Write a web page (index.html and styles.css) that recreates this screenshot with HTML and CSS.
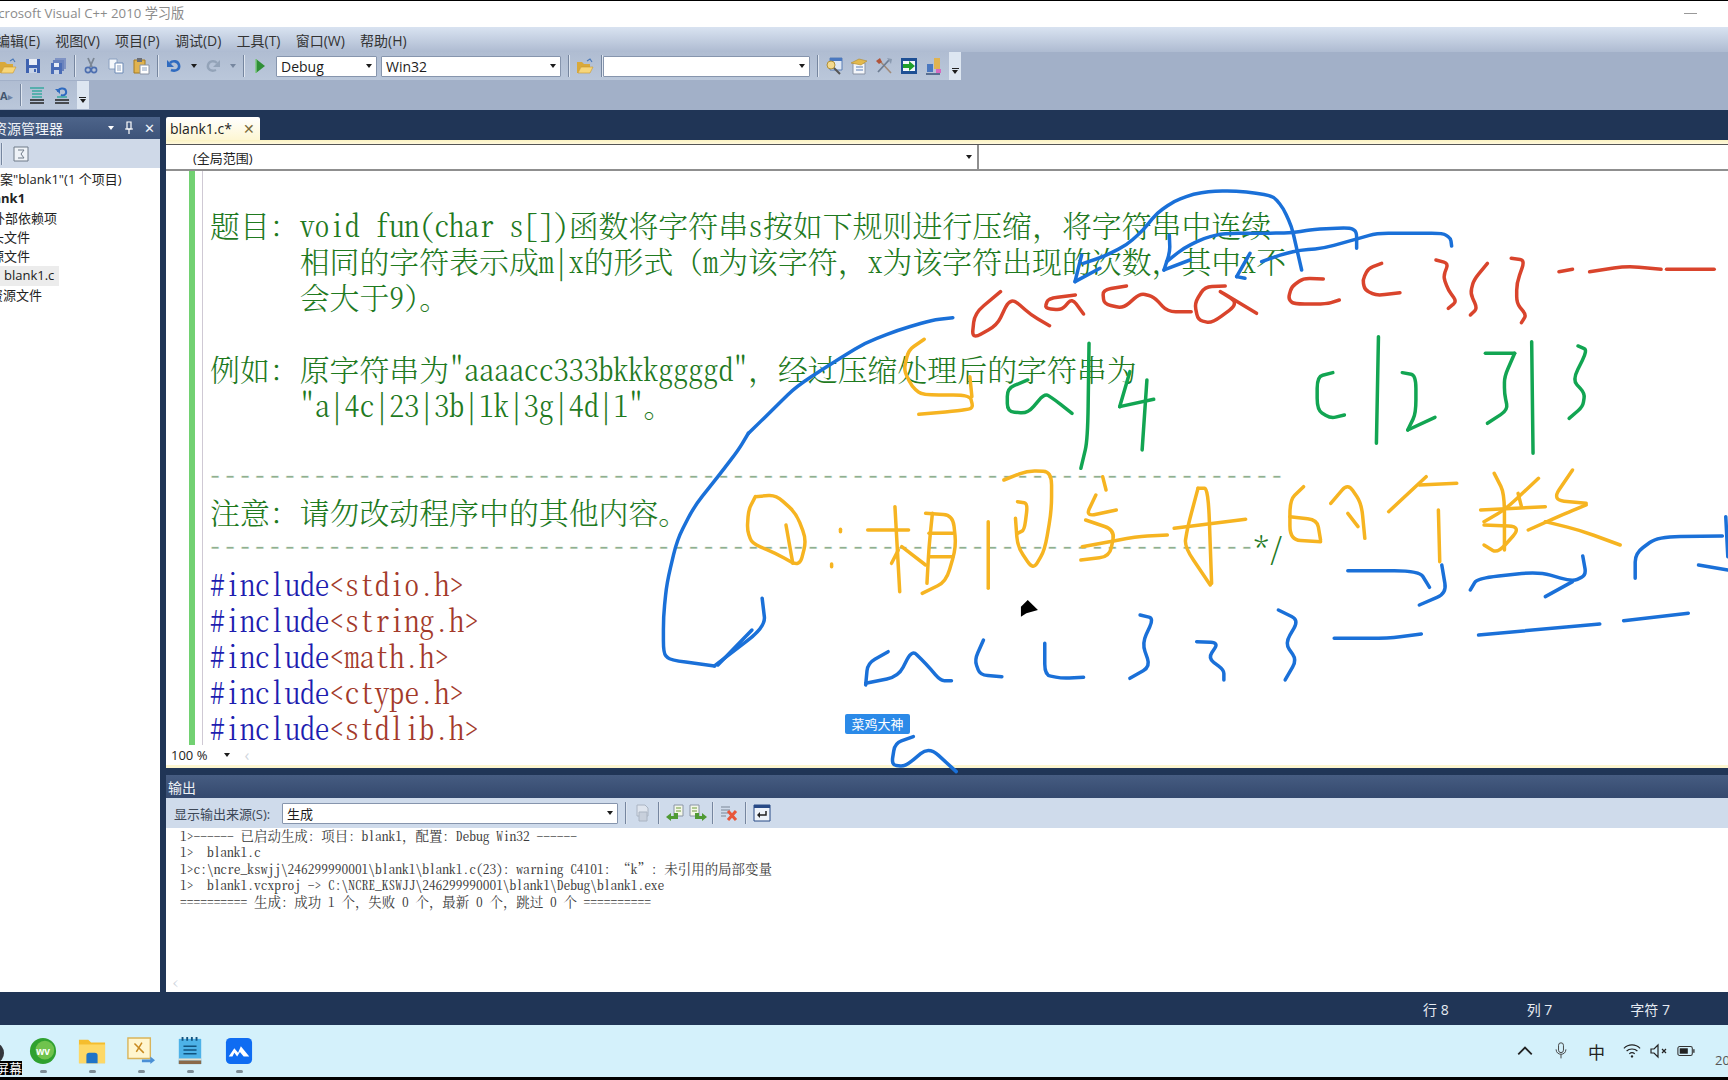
FILE: index.html
```html
<!DOCTYPE html>
<html lang="zh">
<head>
<meta charset="utf-8">
<title>Visual C++ 2010</title>
<link rel="stylesheet" href="styles.css">
</head>
<body>
<svg class="defs" aria-hidden="true">
  <symbol id="i-open" viewBox="0 0 18 18"><path d="M1 5h5l2 2h6v3H5l-3 6H1z" fill="#d9a93a"/><path d="M5 10h12l-3 6H2z" fill="#f7d67a" stroke="#c9972d" stroke-width=".6"/><path d="M11 4l3-2 2 3" fill="none" stroke="#4a78b8" stroke-width="1.2"/></symbol>
  <symbol id="i-save" viewBox="0 0 18 18"><path d="M2 2h14v14H2z" fill="#3e62b0"/><path d="M5 2h8v6H5z" fill="#e8edf6"/><path d="M5 11h8v5H5z" fill="#c8d4e8"/><path d="M10 12h2v3h-2z" fill="#3e62b0"/></symbol>
  <symbol id="i-saveall" viewBox="0 0 18 18"><path d="M6 1h11v11H6z" fill="#7f93c4"/><path d="M4 3h11v11H4z" fill="#6a83bd"/><path d="M2 6h11v11H2z" fill="#4a6cb6"/><path d="M5 6h5v4H5z" fill="#e8edf6"/><path d="M5 13h5v4H5z" fill="#c8d4e8"/></symbol>
  <symbol id="i-cut" viewBox="0 0 18 18"><path d="M6 1l4 9M12 1l-4 9" stroke="#7b8694" stroke-width="1.8" fill="none"/><circle cx="6" cy="13" r="2.6" fill="none" stroke="#4d6fb0" stroke-width="1.6"/><circle cx="12" cy="13" r="2.6" fill="none" stroke="#4d6fb0" stroke-width="1.6"/></symbol>
  <symbol id="i-copy" viewBox="0 0 18 18"><path d="M2 2h8v10H2z" fill="#f4f7fb" stroke="#8aa0c0"/><path d="M8 6h8v10H8z" fill="#fff" stroke="#6d8ab5"/><path d="M10 9h4M10 11h4M10 13h4" stroke="#8aa0c0"/></symbol>
  <symbol id="i-paste" viewBox="0 0 18 18"><path d="M2 3h11v13H2z" fill="#e0b350" stroke="#a47a20"/><path d="M5 1h5v4H5z" fill="#6b6f78"/><path d="M8 8h9v9H8z" fill="#fff" stroke="#8a94a5"/><path d="M10 11h5M10 13h5" stroke="#8aa0c0"/></symbol>
  <symbol id="i-undo" viewBox="0 0 18 18"><path d="M6 13c5 2 9-1 8-5s-6-5-9-2" fill="none" stroke="#2f6bc0" stroke-width="2.6"/><path d="M2 3v7h7z" fill="#2f6bc0"/></symbol>
  <symbol id="i-redo" viewBox="0 0 18 18"><path d="M12 13c-5 2-9-1-8-5s6-5 9-2" fill="none" stroke="#93a3b8" stroke-width="2.4"/><path d="M16 3v7H9z" fill="#93a3b8"/></symbol>
  <symbol id="i-play" viewBox="0 0 18 18"><path d="M5 2l9 7-9 7z" fill="#2f8f36"/><path d="M5 2v14" stroke="#7cc780" stroke-width="1.5"/></symbol>
  <symbol id="i-find" viewBox="0 0 18 18"><path d="M5 1h12v12H5z" fill="#dfe8f4" stroke="#5b7fb5"/><path d="M5 1h12v3H5z" fill="#4a78c0"/><circle cx="6" cy="8" r="4" fill="#f3d98e" stroke="#b0903a"/><path d="M9 11l6 6" stroke="#555" stroke-width="2"/></symbol>
  <symbol id="i-folder2" viewBox="0 0 18 18"><path d="M3 6h12v11H3z" fill="#f4f6fa" stroke="#8a94a5"/><path d="M1 6l8-4 8 2-6 4z" fill="#e3b94d" stroke="#b08a2a" stroke-width=".6"/><path d="M6 10h7M6 13h7" stroke="#5b7fb5"/></symbol>
  <symbol id="i-tools" viewBox="0 0 18 18"><path d="M4 3l12 13" stroke="#a08a78" stroke-width="1.6"/><path d="M14 3L3 15" stroke="#6d7d92" stroke-width="1.8"/><path d="M1 4l4-3 2 4-3 2z" fill="#b0543a"/><path d="M12 1l5 1-1 5-2-3z" fill="#8a9ab0"/></symbol>
  <symbol id="i-export" viewBox="0 0 18 18"><path d="M1 1h16v16H1z" fill="#1d4f94"/><path d="M3 4h12v10H3z" fill="#f2f6fb"/><path d="M3 7h6V4l6 5-6 5v-3H3z" fill="#1fa02c"/></symbol>
  <symbol id="i-build" viewBox="0 0 18 18"><path d="M2 7h6v8H2z" fill="#4a78c0"/><path d="M9 1h6v11H9z" fill="#e0b350"/><path d="M11 12h5v4h-5z" fill="#d66ac0"/><path d="M1 16h14v2H1z" fill="#596f90"/></symbol>
  <symbol id="i-list" viewBox="0 0 18 18"><path d="M2 2h14M4 5h10M4 8h10M4 11h10" stroke="#39a9a0" stroke-width="1.5"/><path d="M2 14h14M2 17h14" stroke="#222" stroke-width="1.5"/></symbol>
  <symbol id="i-list2" viewBox="0 0 18 18"><path d="M5 6c0-4 7-5 8-1s-3 5-5 4" fill="none" stroke="#2f6bc0" stroke-width="2"/><path d="M2 3l5 0 0 5z" fill="#2f6bc0"/><path d="M4 11h10" stroke="#39a9a0" stroke-width="1.5"/><path d="M2 14h14M2 17h14" stroke="#222" stroke-width="1.5"/></symbol>
  <symbol id="i-page" viewBox="0 0 18 18"><path d="M2 2h14v14H2z" fill="#eef2f7" stroke="#6f7a88"/><path d="M6 5h6l-3 4 3 4H6" fill="none" stroke="#6f7a88"/></symbol>
  <symbol id="i-fade" viewBox="0 0 18 18"><path d="M4 1h8l3 3v8H4z" fill="#dfe5ee" stroke="#aab4c2"/><path d="M6 8h8v9H6z" fill="#c8d0dc" stroke="#aab4c2"/></symbol>
  <symbol id="i-prev" viewBox="0 0 18 18"><path d="M8 1h9v11H8z" fill="#f3f7e8" stroke="#8a94a5"/><path d="M10 4h5M10 7h5" stroke="#6d9c3a"/><path d="M8 9v3h-3V9L0 13l5 4v-2h7V9z" fill="#4f9a34"/></symbol>
  <symbol id="i-next" viewBox="0 0 18 18"><path d="M1 1h9v11H1z" fill="#f3f7e8" stroke="#8a94a5"/><path d="M3 4h5M3 7h5" stroke="#6d9c3a"/><path d="M10 9v3h3V9l5 4-5 4v-2H6V9z" fill="#4f9a34"/></symbol>
  <symbol id="i-clear" viewBox="0 0 18 18"><path d="M1 3h9M1 6h9M1 9h7M1 12h5" stroke="#98a4b4" stroke-width="1.4"/><path d="M8 7l8 9M16 7l-8 9" stroke="#e8563a" stroke-width="3"/></symbol>
  <symbol id="i-wrap" viewBox="0 0 18 18"><path d="M1 1h16v16H1z" fill="#eef3fa" stroke="#284a86"/><path d="M1 1h16v3H1z" fill="#284a86"/><path d="M5 11h8V7" fill="none" stroke="#222" stroke-width="1.5"/><path d="M7 8v6l-3-3z" fill="#222"/></symbol>
  <symbol id="i-pin" viewBox="0 0 12 14"><path d="M4 1h4v7H4z" fill="none" stroke="#fff" stroke-width="1.2"/><path d="M2 8h8M6 8v5" stroke="#fff" stroke-width="1.2"/></symbol>
  <symbol id="t-wv" viewBox="0 0 30 30"><circle cx="15" cy="15" r="14" fill="#2fa12f"/><circle cx="17" cy="14" r="10" fill="#8bd15a" opacity=".7"/><text x="15" y="19" text-anchor="middle" class="wv-text">wv</text></symbol>
  <symbol id="t-folder" viewBox="0 0 30 30"><path d="M1 3h10l3 3h15v22H1z" fill="#f5bd2d"/><path d="M1 8h28v20H1z" fill="#fdd866"/><path d="M9 20q0-3 3-3h6q3 0 3 3v8H9z" fill="#1f74c8"/></symbol>
  <symbol id="t-shot" viewBox="0 0 30 30"><path d="M1 1h24v22H1z" fill="#fff6cf" stroke="#d9b45a" stroke-width="1.5"/><path d="M8 7l10 10M16 6l-6 10" stroke="#c98a1f" stroke-width="1.6"/><path d="M16 24h9v-3l5 4-5 4v-2h-9z" fill="#4a90d6"/></symbol>
  <symbol id="t-note" viewBox="0 0 30 30"><path d="M3 2h24v27H3z" fill="#4db2e8"/><path d="M3 25h24v4H3z" fill="#8a6a4a"/><path d="M3 23h24v2H3z" fill="#e7e0d0"/><path d="M8 10h14M8 14h14M8 18h14" stroke="#11537f" stroke-width="1.6"/><path d="M7 0v4M12 0v4M17 0v4M22 0v4" stroke="#11537f" stroke-width="2"/></symbol>
  <symbol id="t-app" viewBox="0 0 30 30"><rect x="1" y="1" width="28" height="28" rx="5" fill="#0f6cf2"/><path d="M4 21l6-9 4 5 3-7 9 11h-6l-4-5-3 5-3-4-2 4z" fill="#fff"/></symbol>
</svg>

<div class="titleline"></div>
<header class="titlebar"><span class="titletext">Microsoft Visual C++ 2010 学习版</span><span class="minimize"></span></header>
<nav class="menubar">
  <span class="m m-first">编辑(E)</span><span class="m">视图(V)</span><span class="m">项目(P)</span><span class="m">调试(D)</span><span class="m">工具(T)</span><span class="m">窗口(W)</span><span class="m">帮助(H)</span>
</nav>
<div class="toolrow tool1">
  <div class="band">
    <svg class="ic ic-first"><use href="#i-open"/></svg><svg class="ic"><use href="#i-save"/></svg><svg class="ic"><use href="#i-saveall"/></svg><i class="sep"></i>
    <svg class="ic"><use href="#i-cut"/></svg><svg class="ic"><use href="#i-copy"/></svg><svg class="ic"><use href="#i-paste"/></svg><i class="sep"></i>
    <svg class="ic"><use href="#i-undo"/></svg><b class="arrow a-dark"></b><svg class="ic"><use href="#i-redo"/></svg><b class="arrow a-light"></b><i class="sep"></i>
    <svg class="ic"><use href="#i-play"/></svg>
    <div class="combo c-debug"><span>Debug</span><b class="arrow"></b></div>
    <div class="combo c-win"><span>Win32</span><b class="arrow"></b></div>
    <i class="sep"></i><svg class="ic"><use href="#i-open"/></svg><i class="sep"></i>
    <div class="combo c-blank"><b class="arrow"></b></div>
    <i class="sep"></i>
    <svg class="ic"><use href="#i-find"/></svg><svg class="ic"><use href="#i-folder2"/></svg><svg class="ic"><use href="#i-tools"/></svg><svg class="ic"><use href="#i-export"/></svg><svg class="ic"><use href="#i-build"/></svg>
    <div class="cap"><b class="capbar"></b><b class="arrow"></b></div>
  </div>
</div>
<div class="toolrow tool2">
  <div class="band band2">
    <span class="fontbtn">A<em>▸</em></span><i class="sep"></i>
    <svg class="ic"><use href="#i-list"/></svg><svg class="ic"><use href="#i-list2"/></svg>
    <div class="cap"><b class="capbar"></b><b class="arrow"></b></div>
  </div>
</div>

<main class="shell">
  <div class="panes">
    <aside class="side">
      <div class="sidehead"><span class="sidetitle">资源管理器</span><span class="sidectl"><b class="arrow a-white"></b><svg class="pin"><use href="#i-pin"/></svg><span class="close">✕</span></span></div>
      <div class="sidetools"><i class="sep sep-side"></i><svg class="ic"><use href="#i-page"/></svg></div>
      <div class="tree">
        <div class="row r-sol">解决方案"blank1"(1 个项目)</div>
        <div class="row r-proj">blank1</div>
        <div class="row r-a">外部依赖项</div>
        <div class="row r-b">头文件</div>
        <div class="row r-b">源文件</div>
        <div class="row r-sel"><span>blank1.c</span></div>
        <div class="row r-c">资源文件</div>
      </div>
    </aside>
    <section class="work">
      <div class="tabs"><div class="tab"><span>blank1.c*</span><span class="tabx">✕</span></div></div>
      <div class="yellow"></div>
      <div class="scope"><div class="scope-l"><span>(全局范围)</span><b class="arrow"></b></div><div class="scope-r"></div></div>
      <div class="editor">
        <div class="gutter"></div>
        <div class="bar"></div>
        <div class="rule"></div>
        <div class="code">
          <div class="ln"></div>
          <div class="ln">题目：<span class="la">void fun(char s[])</span>函数将字符串<span class="la">s</span>按如下规则进行压缩，将字符串中连续</div>
          <div class="ln ind">相同的字符表示成<span class="la">m|x</span>的形式（<span class="la">m</span>为该字符，<span class="la">x</span>为该字符出现的次数，其中<span class="la">x</span>不</div>
          <div class="ln ind">会大于<span class="la">9</span>）。</div>
          <div class="ln"></div>
          <div class="ln">例如：原字符串为<span class="la">"aaaacc333bkkkggggd"</span>，经过压缩处理后的字符串为</div>
          <div class="ln ind"><span class="la">"a|4c|23|3b|1k|3g|4d|1"</span>。</div>
          <div class="ln"></div>
          <div class="ln"><span class="hy">------------------------------------------------------------------------</span></div>
          <div class="ln">注意：请勿改动程序中的其他内容。</div>
          <div class="ln"><span class="hy">----------------------------------------------------------------------</span><span class="la">*/</span></div>
          <div class="ln"><span class="la kw">#include</span><span class="la st">&lt;stdio.h&gt;</span></div>
          <div class="ln"><span class="la kw">#include</span><span class="la st">&lt;string.h&gt;</span></div>
          <div class="ln"><span class="la kw">#include</span><span class="la st">&lt;math.h&gt;</span></div>
          <div class="ln"><span class="la kw">#include</span><span class="la st">&lt;ctype.h&gt;</span></div>
          <div class="ln"><span class="la kw">#include</span><span class="la st">&lt;stdlib.h&gt;</span></div>
        </div>
      </div>
      <div class="zoombar"><span>100 %</span><b class="arrow"></b><span class="lt">‹</span></div>
      <div class="yellow2"></div>
      <div class="outhead">输出</div>
      <div class="outtools">
        <span class="outlabel">显示输出来源(S):</span>
        <div class="combo c-out"><span>生成</span><b class="arrow"></b></div>
        <i class="sep"></i><svg class="ic"><use href="#i-fade"/></svg><i class="sep"></i>
        <svg class="ic ic-tight"><use href="#i-prev"/></svg><svg class="ic ic-tight"><use href="#i-next"/></svg><i class="sep"></i>
        <svg class="ic"><use href="#i-clear"/></svg><i class="sep"></i><svg class="ic"><use href="#i-wrap"/></svg>
      </div>
      <div class="output">
        <div class="ol">1&gt;------ 已启动生成: 项目: blank1<span class="fw">，</span>配置: Debug Win32 ------</div>
        <div class="ol">1&gt;  blank1.c</div>
        <div class="ol">1&gt;c:\ncre_kswjj\246299990001\blank1\blank1.c(23): warning C4101: “k”: 未引用的局部变量</div>
        <div class="ol">1&gt;  blank1.vcxproj -&gt; C:\NCRE_KSWJJ\246299990001\blank1\Debug\blank1.exe</div>
        <div class="ol">========== 生成: 成功 1 个<span class="fw">，</span>失败 0 个<span class="fw">，</span>最新 0 个<span class="fw">，</span>跳过 0 个 ==========</div>
        <div class="outspace"></div>
        <div class="lt lt-out">‹</div>
      </div>
    </section>
  </div>
  <footer class="status"><span class="s1">行 8</span><span class="s2">列 7</span><span class="s3">字符 7</span></footer>
</main>

<div class="taskbar">
  <div class="apps">
    <div class="app"><svg class="tic"><use href="#t-wv"/></svg><i class="dot"></i></div>
    <div class="app"><svg class="tic"><use href="#t-folder"/></svg><i class="dot"></i></div>
    <div class="app"><svg class="tic"><use href="#t-shot"/></svg><i class="dot"></i></div>
    <div class="app"><svg class="tic"><use href="#t-note"/></svg><i class="dot"></i></div>
    <div class="app"><svg class="tic"><use href="#t-app"/></svg><i class="dot"></i></div>
  </div>
  <div class="tray">
    <svg class="ti" viewBox="0 0 16 16"><path d="M2 11l6-6 6 6" fill="none" stroke="#222" stroke-width="1.6"/></svg>
    <svg class="ti" viewBox="0 0 16 22"><rect x="5" y="1" width="6" height="12" rx="3" fill="none" stroke="#444" stroke-width="1.2"/><path d="M2 9c0 8 12 8 12 0M8 15v5" fill="none" stroke="#444" stroke-width="1.2"/></svg>
    <span class="zh">中</span>
    <svg class="ti" viewBox="0 0 20 16"><path d="M1 5c5-5 13-5 18 0M4 8c3-3 9-3 12 0M7 11c2-1.500 4-1.500 6 0" fill="none" stroke="#222" stroke-width="1.3"/><circle cx="10" cy="14" r="1.300" fill="#222"/></svg>
    <svg class="ti ti-near" viewBox="0 0 18 16"><path d="M1 6h3l4-4v12l-4-4H1z" fill="none" stroke="#222" stroke-width="1.200"/><path d="M12 6l4 4M16 6l-4 4" stroke="#222" stroke-width="1.200"/></svg>
    <svg class="ti ti-near" viewBox="0 0 20 14"><rect x="1" y="2" width="16" height="10" rx="2" fill="none" stroke="#333" stroke-width="1.200"/><rect x="3" y="4" width="9" height="6" fill="#222"/><rect x="18" y="5" width="1.500" height="4" fill="#333"/></svg>
    <span class="clock">20:41</span>
  </div>
</div>
<div class="bottomline"></div>

<div class="recorder"><span class="rec-head"></span><span class="rec-label">屏幕</span></div>
<div class="badge">菜鸡大神</div>

<svg class="ink" viewBox="0 0 1728 1080" aria-hidden="true">
  <g transform="translate(1060 180) scale(.3333)">
    <g class="pen blue">
      <path d="M65 225L45 305"/>
      <path d="M45 305L120 265"/>
      <path d="M70 250L130 230L200 195L250 150L290 100L340 65L400 42L470 32L560 35L640 48L670 85L695 140L710 205L725 270"/>
      <path d="M328 165L330 215L312 270"/>
      <path d="M312 270L390 240"/>
      <path d="M320 245L370 205L430 175L490 160L620 160L700 158L760 148L870 143L890 155L890 205"/>
      <path d="M570 220L530 290"/>
      <path d="M530 290L555 295"/>
      <path d="M605 245L660 225L720 210L790 205L880 180L950 160L1050 160L1150 160L1172 175L1175 198"/>
    </g>
    <g class="pen red">
      <path d="M790 297L730 295L695 320L685 355L700 372L800 372L838 360"/>
      <path d="M965 250L925 265L908 300L915 330L950 347L1020 338"/>
      <path d="M1128 240L1165 250L1150 290L1165 330L1190 365L1165 385"/>
    </g>
  </g>
  <g transform="translate(660 180) scale(.681 .3333)">
    <g class="pen red">
      <path d="M500 335L462 400L458 478L495 435L510 370L520 360L545 405L572 437"/>
      <path d="M610 345L570 355L565 385L590 390L605 355L622 402"/>
      <path d="M685 318L650 330L652 372L680 385L705 340L725 350L745 395L780 395"/>
      <path d="M830 318L800 320L785 370L790 420L810 430L850 370L815 325L876 400"/>
      <path d="M1215 250L1195 300L1190 340L1200 385L1190 405"/>
      <path d="M1250 235L1270 240L1258 310L1258 370L1272 405L1265 428"/>
      <path d="M1320 275L1340 268"/>
      <path d="M1365 275L1420 258L1470 268"/>
      <path d="M1478 268L1548 268"/>
    </g>
    <g class="pen blue">
      <path d="M430 413L400 420L350 450L300 490L260 540L200 620L165 690L130 760"/>
    </g>
    <g class="pen yellow">
      <path d="M388 478L365 510L358 570L370 620L385 645L455 645L460 685L440 692L380 703"/>
      <path d="M455 590L458 650"/>
    </g>
    <g class="pen green">
      <path d="M540 600L510 625L510 695L540 700L565 640L580 660L605 700"/>
      <path d="M630 490L628 780L618 865"/>
      <path d="M690 575L675 680"/>
      <path d="M675 680L725 658"/>
      <path d="M715 600L708 810"/>
      <path d="M988 578L965 590L965 690L985 715L1005 705"/>
      <path d="M1055 470L1052 790"/>
      <path d="M1090 578L1110 585L1110 700L1098 750"/>
      <path d="M1098 750L1138 712"/>
      <path d="M1212 520L1255 520"/>
      <path d="M1255 520L1240 590L1240 640L1245 690L1215 730"/>
      <path d="M1280 485L1282 820"/>
      <path d="M1348 498L1362 510L1340 600L1358 640L1355 680L1335 715"/>
    </g>
  </g>
  <g transform="translate(660 450) scale(.681 .3333)">
    <g class="pen blue">
      <path d="M130 -51L115 0L85 80L50 170L25 270L10 400L5 500L5 610L15 630L80 648"/>
      <path d="M85 645L135 540"/>
      <path d="M80 648L155 530L150 445"/>
      <path d="M302 705L305 640L335 605"/>
      <path d="M302 700L350 680L370 600L390 640L412 692L428 692"/>
      <path d="M475 570L462 630L470 675L502 680"/>
      <path d="M565 580L565 675L590 685L622 682"/>
      <path d="M705 495L725 505L708 580L720 650L690 685"/>
      <path d="M788 575L820 578L805 625L828 660L828 690"/>
      <path d="M908 480L938 510L918 580L935 630L918 690"/>
      <path d="M990 565L1070 565L1118 552"/>
      <path d="M1010 362L1115 362L1130 412"/>
      <path d="M1148 345L1155 430L1115 465"/>
      <path d="M1190 420L1200 385L1290 365L1340 395L1360 375L1355 318"/>
      <path d="M1340 395L1300 440"/>
      <path d="M1202 555L1380 522"/>
      <path d="M1415 512L1510 490"/>
      <path d="M1432 385L1432 310L1465 260L1560 258"/>
      <path d="M1565 200L1568 320"/>
      <path d="M1525 345L1568 360"/>
      <path d="M372 860L345 880L340 945L360 950L395 890L435 965"/>
    </g>
    <g class="pen yellow">
      <path d="M140 140L170 135L200 190L215 270L205 350L170 310L135 280L128 240L130 180L140 140"/>
      <path d="M185 225L195 340"/>
      <path d="M265 238L265 245"/>
      <path d="M252 342L252 350"/>
      <path d="M305 240L365 240"/>
      <path d="M345 170L352 425"/>
      <path d="M350 300L340 340"/>
      <path d="M355 290L390 345"/>
      <path d="M390 190L430 195L435 290L420 395L385 430"/>
      <path d="M400 190L395 290L392 400"/>
      <path d="M395 250L430 250"/>
      <path d="M395 320L430 320"/>
      <path d="M482 215L482 415"/>
      <path d="M505 90L540 62L575 65L575 180L565 300L548 360L525 290L522 205"/>
      <path d="M525 155L540 160L535 240L525 250"/>
      <path d="M650 80L655 120"/>
      <path d="M640 135L625 200L670 180"/>
      <path d="M625 210L668 240L660 320L618 330"/>
      <path d="M620 290L700 260L745 255"/>
      <path d="M790 115L775 230L770 290L808 405"/>
      <path d="M790 115L805 115L810 400"/>
      <path d="M755 235L860 208"/>
      <path d="M945 110L925 150L925 270L970 275"/>
      <path d="M925 200L965 210L970 270"/>
      <path d="M985 160L1010 100L1030 160L1035 265"/>
      <path d="M1010 190L1025 230"/>
      <path d="M1070 185L1125 80"/>
      <path d="M1115 105L1170 100"/>
      <path d="M1143 180L1145 335"/>
      <path d="M1225 70L1240 130L1240 300"/>
      <path d="M1290 85L1240 180L1210 215"/>
      <path d="M1205 180L1300 170"/>
      <path d="M1260 130L1265 170"/>
      <path d="M1210 225L1265 230L1230 310L1210 285"/>
      <path d="M1340 60L1310 150L1360 160"/>
      <path d="M1275 240L1330 190L1360 165"/>
      <path d="M1300 215L1350 240L1410 285"/>
    </g>
    <path class="nib" d="M540 450L555 480L538 490L530 500L530 470z"/>
  </g>
</svg>
<script src="ink.js"></script>
</body>
</html>
```

FILE: styles.css
```css
* { box-sizing: border-box; }
html, body { margin: 0; padding: 0; }
body {
  position: relative;
  width: 1728px;
  height: 1080px;
  overflow: hidden;
  display: flex;
  flex-direction: column;
  background: #fff;
  font-family: "Open Sans", "Noto Sans CJK SC", sans-serif;
  font-size: 13px;
  color: #222;
}
.defs { position: absolute; width: 0; height: 0; overflow: hidden; }
i, em, b { font-style: normal; }

.titleline { height: 1px; background: #000; flex: none; }
.titlebar { height: 26px; flex: none; background: #fff; display: flex; align-items: center; justify-content: space-between; overflow: hidden; }
.titletext { margin: -3px 0 0 -17px; font-size: 13.200px; color: #8b8b8b; white-space: nowrap; }
.minimize { width: 13px; height: 1px; background: #999; margin-right: 31px; margin-top: -2px; }

.menubar { height: 25px; flex: none; display: flex; align-items: center; gap: 15.200px; background: linear-gradient(#d9e3f1, #aebbd1); color: #333; font-size: 14px; white-space: nowrap; overflow: hidden; }
.m-first { margin-left: -4px; }

.toolrow { flex: none; background: #a2b0c8; display: flex; }
.tool1 { height: 28px; }
.tool2 { height: 30px; }
.band { display: flex; align-items: center; height: 28px; gap: 7px; background: linear-gradient(#b0bdd2, #bac7da); }
.band2 { margin-top: 1px; }
.ic { width: 18px; height: 18px; flex: none; }
.ic-first { margin-left: -1px; }
.sep { width: 1px; height: 22px; background: #76869f; flex: none; box-shadow: 1px 0 0 #dfe6f0; }
.arrow { display: inline-block; width: 0; height: 0; border-left: 3.500px solid transparent; border-right: 3.500px solid transparent; border-top: 4px solid #1c1c1c; flex: none; }
.a-dark { margin: 0 .5px; }
.a-light { border-top-color: #76869f; margin: 0 .5px; }
.a-white { border-top-color: #fff; }
.combo { height: 21px; background: #fff; border: 1px solid #8695ad; border-radius: 1px; display: flex; align-items: center; justify-content: space-between; padding: 0 4px; font-size: 14px; color: #1c1c1c; flex: none; }
.c-debug { width: 101px; }
.c-win { width: 180px; margin-left: -3px; }
.c-blank { width: 207px; margin-left: -6px; justify-content: flex-end; }
.cap { display: flex; flex-direction: column; align-items: center; gap: 1px; width: 12px; height: 100%; justify-content: center; background: #dde6f1; padding-top: 9px; margin-left: -1px; }
.capbar { width: 7px; height: 1px; background: #222; }
.fontbtn { font-size: 11px; font-weight: bold; color: #43566f; white-space: nowrap; }
.fontbtn em { color: #6f84a5; font-size: 9px; }

.shell { flex: 1; min-height: 0; background: #203556; display: flex; flex-direction: column; }
.panes { flex: 1; min-height: 0; display: flex; padding-top: 7px; gap: 6px; }

.side { width: 160px; flex: none; display: flex; flex-direction: column; }
.sidehead { height: 22px; flex: none; background: linear-gradient(#4d648a, #3d5379); color: #f0f3f8; display: flex; align-items: center; justify-content: space-between; padding-right: 5px; overflow: hidden; }
.sidetitle { margin-left: -7px; font-size: 14px; white-space: nowrap; }
.sidectl { display: flex; align-items: center; gap: 9px; }
.pin { width: 12px; height: 14px; }
.close { font-size: 13px; }
.sidetools { height: 29px; flex: none; background: #cfd9e8; display: flex; align-items: center; gap: 10px; padding-left: 1px; }
.tree { flex: 1; background: #fff; padding-top: 2px; overflow: hidden; }
.row { height: 19.300px; line-height: 19.300px; white-space: nowrap; font-size: 13px; color: #222; }
.r-sol { margin-left: -39px; }
.r-proj { margin-left: -19px; font-weight: bold; }
.r-a { margin-left: -8px; }
.r-b { margin-left: -9px; }
.r-c { margin-left: -10px; }
.r-sel span { display: inline-block; background: #ececec; width: 59px; padding-left: 4px; }

.work { flex: 1; min-width: 0; display: flex; flex-direction: column; }
.tabs { height: 23px; flex: none; display: flex; }
.tab { width: 94px; background: linear-gradient(#fff, #fdf6d2); border-radius: 2px 2px 0 0; display: flex; align-items: center; justify-content: space-between; padding: 0 5px 0 4px; font-size: 14px; color: #222; }
.tabx { font-size: 14px; color: #7a6a3a; }
.yellow { height: 5px; flex: none; background: linear-gradient(#fbf3c2, #fff8dc); border-bottom: 1px solid #555; }
.scope { height: 26px; flex: none; display: flex; background: #fff; border-bottom: 2px solid #8f8f8f; }
.scope-l { width: 813px; flex: none; display: flex; align-items: center; justify-content: space-between; padding: 0 5px 0 27px; border-right: 2px solid #8f8f8f; font-size: 13px; }
.scope-r { flex: 1; }

.editor { height: 574px; flex: none; display: flex; background: #fff; overflow: hidden; }
.gutter { width: 23px; flex: none; }
.bar { width: 6px; flex: none; background: #72d172; }
.rule { width: 1px; flex: none; margin-left: 7px; background: #cfc9d4; }
.code { flex: 1; padding-left: 7px; font-family: "Noto Serif CJK SC", "Noto Sans CJK SC", serif; font-size: 29.900px; font-weight: 300; color: #1f7a1f; white-space: nowrap; }
.ln { height: 35.950px; line-height: 35.950px; }
.ind { padding-left: 89.700px; }
.la { font-feature-settings: "hwid"; }
.hy { position: relative; top: -5px; margin-left: -3px; font-family: "Liberation Mono", monospace; font-size: 27px; letter-spacing: -1.250px; -webkit-text-stroke: .35px #fff; color: #8fb08f; }
.kw { color: #1d1db0; }
.st { color: #a33a2a; }

.zoombar { height: 20px; flex: none; background: #fff; display: flex; align-items: center; padding-left: 5px; font-size: 13px; color: #222; }
.zoombar .arrow { margin-left: 17px; }
.lt { color: #cfd6de; font-size: 16px; margin-left: 14px; }
.yellow2 { height: 3px; flex: none; background: #fdf6cf; margin-bottom: 7px; }
.outhead { height: 23px; flex: none; background: linear-gradient(#465c81, #34496e); color: #eef2f7; font-size: 14px; display: flex; align-items: center; padding-left: 2px; }
.outtools { height: 30px; flex: none; background: #cfdbeb; display: flex; align-items: center; gap: 7px; padding-left: 8px; }
.outlabel { font-size: 13px; color: #3c4756; white-space: nowrap; width: 101px; flex: none; }
.c-out { width: 336px; font-size: 13px; }
.ic-tight { margin-right: -2px; }
.output { flex: 1; background: #fff; padding: 0 0 0 14px; display: flex; flex-direction: column; font-family: "Noto Serif CJK SC", "Noto Sans CJK SC", serif; font-size: 13.460px; font-feature-settings: "hwid"; color: #3a3a3a; white-space: pre; }
.ol { height: 16.700px; line-height: 16.700px; margin-top: -.200px; }
.fw { font-feature-settings: normal; }
.outspace { flex: 1; }
.lt-out { height: 20px; line-height: 20px; margin-left: -7px; }

.status { height: 33px; flex: none; display: flex; align-items: center; justify-content: flex-end; color: #e6ebf2; font-size: 14px; padding-right: 58px; }
.s1 { margin-right: 78px; }
.s2 { margin-right: 78px; }

.taskbar { height: 52px; flex: none; background: #d4f1fb; display: flex; align-items: center; justify-content: space-between; overflow: hidden; }
.apps { display: flex; gap: 21px; padding-left: 29px; }
.app { width: 28px; display: flex; flex-direction: column; align-items: center; gap: 5px; padding-top: 7px; }
.tic { width: 28px; height: 28px; }
.wv-text { font: bold 11px "Liberation Sans", sans-serif; fill: #fff; }
.dot { width: 7px; height: 3px; border-radius: 2px; background: #7d8d97; }
.tray { display: flex; align-items: center; gap: 18px; margin-right: -32px; }
.ti { width: 18px; height: 18px; flex: none; }
.ti-near { margin-left: -9px; }
.zh { font-size: 17px; color: #222; }
.clock { font-size: 13px; color: #555; padding-top: 18px; margin-left: 2px; width: 45px; white-space: nowrap; }
.bottomline { height: 3px; flex: none; background: #000; }

.recorder { position: absolute; left: 0; top: 1044px; width: 22px; height: 31px; overflow: hidden; }
.rec-head { position: absolute; left: -10px; top: 0; width: 14px; height: 18px; border-radius: 50%; background: #33363b; }
.rec-label { position: absolute; left: -5px; bottom: 0; height: 14px; line-height: 14px; width: 27px; background: #000; color: #fff; font-size: 13px; white-space: nowrap; text-align: right; }
.badge { position: absolute; left: 845px; top: 714px; width: 65px; height: 20px; line-height: 20px; text-align: center; background: #2b8ae8; border-radius: 2px; color: #fff; font-size: 13px; }

.ink { position: absolute; left: 0; top: 0; width: 1728px; height: 1080px; pointer-events: none; overflow: hidden; }
.pen path { fill: none; stroke-width: 3.500px; stroke-linecap: round; stroke-linejoin: round; vector-effect: non-scaling-stroke; }
.blue path { stroke: #1a70d8; }
.red path { stroke: #d9442c; }
.green path { stroke: #12a552; }
.yellow path { stroke: #f6b421; }
.nib { fill: #000; }
```

FILE: ink.js
```js
// Rounds the corners of the traced pen strokes, keeping the strokes close to the traced points.
var CORNER = 0.35;
document.querySelectorAll('.pen path').forEach(function (stroke) {
  var n = stroke.getAttribute('d').match(/-?[\d.]+/g).map(Number);
  var pts = [];
  for (var i = 0; i < n.length; i += 2) pts.push([n[i], n[i + 1]]);
  if (pts.length < 3) return;
  function along(a, b, t) { return (a[0] + (b[0] - a[0]) * t) + ' ' + (a[1] + (b[1] - a[1]) * t); }
  var d = 'M' + pts[0].join(' ');
  for (var j = 1; j < pts.length - 1; j++) {
    d += 'L' + along(pts[j], pts[j - 1], CORNER);
    d += 'Q' + pts[j].join(' ') + ' ' + along(pts[j], pts[j + 1], CORNER);
  }
  stroke.setAttribute('d', d + 'L' + pts[pts.length - 1].join(' '));
});
```
